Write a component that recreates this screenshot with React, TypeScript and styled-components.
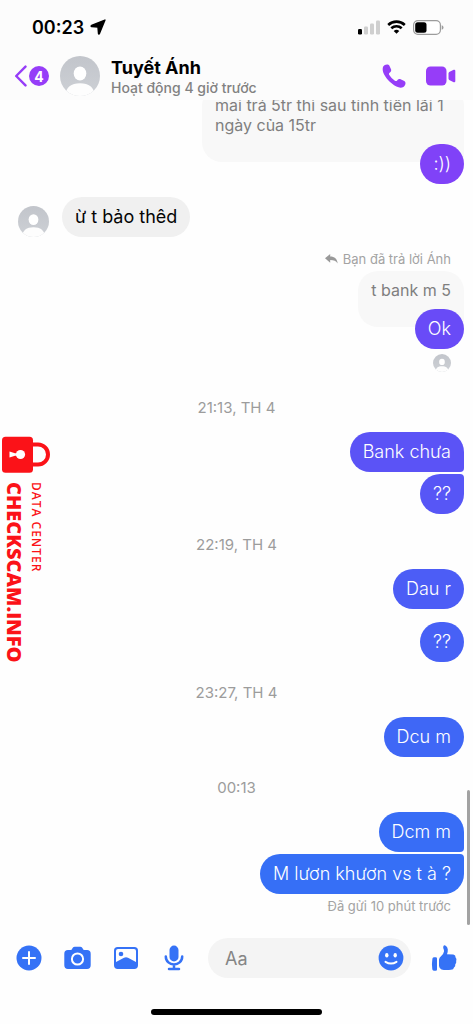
import React from "react";
import styled, { createGlobalStyle } from "styled-components";

const Global = createGlobalStyle`
  * { box-sizing: border-box; }
  body { margin: 0; background: #fefefe; font-family: Inter, "Noto Sans", sans-serif; color: #050505; }
  button, input { font: inherit; }
`;

const Screen = styled.div`
  position: relative;
  display: flex;
  flex-direction: column;
  height: 100vh;
  overflow: hidden;
`;

const Header = styled.header`
  flex: none;
  background: #fcfcfc;
`;

const StatusBar = styled.div`
  display: flex;
  align-items: center;
  justify-content: space-between;
  height: 54px;
  padding: 0 29px 0 32px;
`;

const Clock = styled.div`
  display: flex;
  align-items: center;
  gap: 6px;
  font-size: 18px;
  font-weight: 600;
  color: #000;
`;

const StatusIcons = styled.div`
  display: flex;
  align-items: center;
  gap: 7px;
`;

const NavBar = styled.div`
  display: flex;
  align-items: center;
  height: 46px;
  padding: 0 17px 2px 14px;
`;

const IconButton = styled.button<{ $color?: string }>`
  display: flex;
  align-items: center;
  justify-content: center;
  flex: none;
  padding: 0;
  border: 0;
  background: none;
  color: ${(p) => p.$color ?? "#3572f6"};
`;

const Count = styled.span`
  display: grid;
  place-items: center;
  width: 20px;
  height: 20px;
  margin-left: 1px;
  border-radius: 50%;
  background: #963df8;
  color: #fff;
  font-size: 14px;
  font-weight: 700;
`;

const Profile = styled.div`
  flex: 1;
  min-width: 0;
  display: flex;
  align-items: center;
  gap: 11px;
  margin-left: 11px;
`;

const Name = styled.h1`
  margin: 0;
  font-size: 18px;
  line-height: 22px;
  font-weight: 700;
  color: #000;
`;

const Activity = styled.p`
  margin: 0;
  font-size: 14px;
  line-height: 17px;
  font-weight: 500;
  color: #828282;
  white-space: nowrap;
`;

const Calls = styled.div`
  display: flex;
  align-items: center;
  gap: 20px;
`;

const Thread = styled.main`
  flex: 1;
  min-height: 0;
  display: flex;
  flex-direction: column;
  justify-content: flex-end;
  overflow: hidden;
  padding: 0 9px 11px 18px;
`;

const Bubble = styled.p<{ $color: string; $join?: "top" | "bottom"; $incoming?: boolean }>`
  position: relative;
  flex: none;
  align-self: flex-end;
  margin: 0;
  padding: 8px 13px;
  border-radius: 20px;
  border-top-right-radius: ${(p) => (p.$join === "top" ? 4 : 20)}px;
  border-bottom-right-radius: ${(p) => (p.$join === "bottom" ? 4 : 20)}px;
  background: ${(p) => p.$color};
  color: ${(p) => (p.$incoming ? "#050505" : "#fff")};
  font-size: 18px;
  line-height: 24px;
  font-weight: ${(p) => (p.$incoming ? 400 : 300)};
`;

const Group = styled.div<{ $gap: number }>`
  flex: none;
  display: flex;
  flex-direction: column;
  gap: ${(p) => p.$gap}px;
`;

const Quote = styled.blockquote`
  flex: none;
  align-self: flex-end;
  max-width: 262px;
  margin: 0 0 -18px;
  padding: 9px 13px 27px;
  border-radius: 20px 20px 0 20px;
  background: #f8f8f8;
  color: #7f7f7f;
  font-size: 16px;
  line-height: 20px;
`;

const Incoming = styled.div`
  flex: none;
  display: flex;
  align-items: flex-end;
  gap: 13px;
  margin: 13px 0 14px;
`;

const ReplyLabel = styled.div`
  flex: none;
  display: flex;
  align-items: center;
  justify-content: flex-end;
  gap: 5px;
  margin-bottom: 4px;
  padding-right: 13px;
  color: #a3a3a3;
  font-size: 13px;
  line-height: 16px;
`;

const Seen = styled.div`
  flex: none;
  display: flex;
  justify-content: flex-end;
  padding: 5px 13px;
`;

const Stamp = styled.time`
  flex: none;
  display: block;
  margin: 23px 0 16px;
  padding-right: 9px;
  text-align: center;
  color: #9c9c9c;
  font-size: 15px;
  line-height: 16px;
`;

const Sent = styled.p`
  flex: none;
  margin: 4px 13px 0 0;
  text-align: right;
  color: #a3a3a3;
  font-size: 13px;
  line-height: 16px;
`;

const Composer = styled.form`
  flex: none;
  display: flex;
  align-items: center;
  padding: 13px 16px 0;
`;

const Tools = styled.div`
  display: flex;
  align-items: center;
  gap: 22px;
  margin-right: 21px;
`;

const Field = styled.div`
  flex: 1;
  min-width: 0;
  display: flex;
  align-items: center;
  height: 40px;
  margin-right: 20px;
  padding: 0 7px 0 17px;
  border-radius: 20px;
  background: #f4f4f4;
`;

const TextInput = styled.input`
  flex: 1;
  min-width: 0;
  padding: 0;
  border: 0;
  outline: 0;
  background: none;
  font-size: 18px;
  color: #050505;
  &::placeholder { color: #858585; opacity: 1; }
`;

const HomeBar = styled.div`
  flex: none;
  width: 36%;
  height: 6px;
  margin: 31px auto 9px;
  border-radius: 3px;
  background: #000;
`;

const ScrollThumb = styled.div`
  position: absolute;
  right: 3px;
  bottom: 99px;
  width: 3px;
  height: 135px;
  border-radius: 2px;
  background: #a2a2a2;
`;

const Watermark = styled.aside`
  position: absolute;
  left: 2px;
  top: 436px;
  display: flex;
  flex-direction: column;
  gap: 9px;
  color: #fb1218;
  font-family: "Open Sans", sans-serif;
`;

const MarkText = styled.div`
  display: flex;
  flex-direction: column;
  writing-mode: vertical-rl;
  white-space: nowrap;
  align-self: flex-start;
`;

const MarkTitle = styled.strong`
  font-size: 20px;
  line-height: 24px;
  font-weight: 800;
`;

const MarkSub = styled.span`
  font-size: 12px;
  line-height: 20px;
  font-weight: 600;
  letter-spacing: 1px;
`;

const AvatarArt = styled.svg`
  display: block;
  flex: none;
`;

function Avatar({ size, id }: { size: number; id: string }) {
  return (
    <AvatarArt width={size} height={size} viewBox="0 0 40 40" aria-hidden="true">
      <defs>
        <linearGradient id={id} x1="0" y1="0" x2="0" y2="1">
          <stop offset="0" stopColor="#c2c5cb" />
          <stop offset="1" stopColor="#cdd0d5" />
        </linearGradient>
        <clipPath id={id + "c"}><circle cx="20" cy="20" r="20" /></clipPath>
      </defs>
      <g clipPath={`url(#${id}c)`}>
        <rect width="40" height="40" fill={`url(#${id})`} />
        <ellipse cx="20" cy="17.500" rx="6.300" ry="7" fill="#fff" />
        <path d="M5 40C6 31 11 27.300 20 27.300S34 31 35 40Z" fill="#fdfdfd" />
      </g>
    </AvatarArt>
  );
}

export default function App() {
  return (
    <>
      <Global />
      <Screen>
        <Header>
          <StatusBar>
            <Clock>
              00:23
              <svg width="16" height="16" viewBox="0 0 15 15" aria-hidden="true">
                <path d="M14 1 8.800 13.600Q8.300 14.400 8 13.500L7.500 7.500 1.500 7Q.6 6.700 1.500 6.100Z" fill="#000" stroke="#000" strokeWidth="1.400" strokeLinejoin="round" />
              </svg>
            </Clock>
            <StatusIcons>
              <svg width="22" height="15" viewBox="0 0 22 15" aria-hidden="true">
                <rect x="0" y="9" width="4" height="5.500" rx="1.200" fill="#000" />
                <g fill="#cfcfcf">
                  <rect x="6" y="6.500" width="4" height="8" rx="1.200" />
                  <rect x="12" y="3.500" width="4" height="11" rx="1.200" />
                  <rect x="18" y=".5" width="4" height="14" rx="1.200" />
                </g>
              </svg>
              <svg width="19" height="14" viewBox="0 0 19 14" fill="none" stroke="#000" strokeWidth="2.600" aria-hidden="true">
                <path d="M1.200 5A12 12 0 0 1 17.800 5" />
                <path d="M4.300 8.300A7.600 7.600 0 0 1 14.700 8.300" />
                <path d="M9.500 13.800 6.700 11Q9.500 8.700 12.300 11Z" fill="#000" stroke="none" />
              </svg>
              <svg width="31" height="15" viewBox="0 0 31 15" aria-hidden="true">
                <rect x=".6" y=".6" width="26.800" height="13.800" rx="4.300" fill="#fff" stroke="#9c9c9c" strokeWidth="1.200" />
                <rect x="2.200" y="2.300" width="11.300" height="10.400" rx="2.500" fill="#000" />
                <path d="M28.700 5.200Q30.500 5.800 30.500 7.500T28.700 9.800Z" fill="#9c9c9c" />
              </svg>
            </StatusIcons>
          </StatusBar>
          <NavBar>
            <IconButton type="button" $color="#963df8" aria-label="Quay lại">
              <svg width="14" height="22" viewBox="0 0 14 22" fill="none" stroke="currentColor" strokeWidth="2.400" strokeLinecap="round" strokeLinejoin="round">
                <path d="M11.500 1.600 2.200 11 11.500 20.400" />
              </svg>
              <Count>4</Count>
            </IconButton>
            <Profile>
              <Avatar size={40} id="a1" />
              <div>
                <Name>Tuyết Ánh</Name>
                <Activity>Hoạt động 4 giờ trước</Activity>
              </div>
            </Profile>
            <Calls>
              <IconButton type="button" $color="#963df8" aria-label="Gọi thoại">
                <svg width="24" height="24" viewBox="0 0 24 24" fill="currentColor">
                  <path d="M1.200 2.600C2.500.5 6-.2 7.400 1.700L9 5.300C9.600 7 8.700 8 7.600 8.800 6.700 9.600 6.900 10.300 7.500 11.300A15 15 0 0 0 12.600 16.500C13.700 17.200 14.400 17.300 15.200 16.400 16 15.300 17.100 14.600 18.600 15.200L22.300 16.900C24.400 18.200 23.500 21.500 21.400 22.900 18.800 24.500 14.500 23.700 9.600 19.300 3.500 14-.9 7.200 1.200 2.600Z" />
                </svg>
              </IconButton>
              <IconButton type="button" $color="#963df8" aria-label="Gọi video">
                <svg width="30" height="20" viewBox="0 0 30 20" fill="currentColor">
                  <rect x="0" y=".5" width="20.500" height="19" rx="4.500" />
                  <path d="M22.500 7.500Q22.500 6.700 23.200 6.100L27.700 3.800Q29.300 3.200 29.300 5V15Q29.300 16.800 27.700 16.200L23.200 13.900Q22.500 13.300 22.500 12.500Z" />
                </svg>
              </IconButton>
            </Calls>
          </NavBar>
        </Header>

        <Thread>
          <Quote>mai trả 5tr thì sau tính tiền lãi 1 ngày của 15tr</Quote>
          <Bubble $color="#8042f8">:))</Bubble>
          <Incoming>
            <Avatar size={31} id="a2" />
            <Bubble $color="#f0f0f0" $incoming>ừ t bảo thêd</Bubble>
          </Incoming>
          <ReplyLabel>
            <svg width="13" height="10" viewBox="0 0 13 10" fill="#999" aria-hidden="true">
              <path d="M0 4.300 5.200 0V2.600C9.500 2.600 12.300 4.800 12.600 9.600 11 7 9 6.100 5.200 6.100V8.700Z" />
            </svg>
            Bạn đã trả lời Ánh
          </ReplyLabel>
          <Quote>t bank m 5</Quote>
          <Bubble $color="#694bf7">Ok</Bubble>
          <Seen><Avatar size={18} id="a3" /></Seen>
          <Stamp>21:13, TH 4</Stamp>
          <Group $gap={2}>
            <Bubble $color="#5b53f6" $join="bottom">Bank chưa</Bubble>
            <Bubble $color="#5756f6" $join="top">??</Bubble>
          </Group>
          <Stamp>22:19, TH 4</Stamp>
          <Group $gap={13}>
            <Bubble $color="#4c5df6">Dau r</Bubble>
            <Bubble $color="#4761f6">??</Bubble>
          </Group>
          <Stamp>23:27, TH 4</Stamp>
          <Bubble $color="#3f67f6">Dcu m</Bubble>
          <Stamp>00:13</Stamp>
          <Group $gap={2}>
            <Bubble $color="#386df6" $join="bottom">Dcm m</Bubble>
            <Bubble $color="#366ff6" $join="top">M lươn khươn vs t à ?</Bubble>
          </Group>
          <Sent>Đã gửi 10 phút trước</Sent>
        </Thread>

        <Composer onSubmit={(e) => e.preventDefault()}>
          <Tools>
            <IconButton type="button" aria-label="Thêm">
              <svg width="26" height="26" viewBox="0 0 26 26">
                <circle cx="13" cy="13" r="12.500" fill="currentColor" />
                <path d="M13 7V19M7 13H19" stroke="#fff" strokeWidth="2" strokeLinecap="round" />
              </svg>
            </IconButton>
            <IconButton type="button" aria-label="Máy ảnh">
              <svg width="27" height="24" viewBox="0 0 27 24">
                <path d="M4 4H6.500Q7.800 4 8.300 2.500 8.900.8 10.600.8H16.400Q18.100.8 18.700 2.500 19.200 4 20.500 4H23Q26.700 4 26.700 7.700V19.300Q26.700 23 23 23H4Q.3 23 .3 19.300V7.700Q.3 4 4 4Z" fill="currentColor" />
                <circle cx="13.500" cy="13" r="5.600" fill="none" stroke="#fff" strokeWidth="2" />
              </svg>
            </IconButton>
            <IconButton type="button" aria-label="Ảnh">
              <svg width="26" height="24" viewBox="0 0 26 24">
                <path fillRule="evenodd" d="M4.700 1H21.300Q25 1 25 4.700V19.300Q25 23 21.300 23H4.700Q1 23 1 19.300V4.700Q1 1 4.700 1ZM5 3Q3 3 3 5V16L11 11.800Q13 10.800 15 11.800L23 16V5Q23 3 21 3Z" fill="currentColor" />
                <circle cx="8" cy="8" r="2.300" fill="currentColor" />
              </svg>
            </IconButton>
            <IconButton type="button" aria-label="Ghi âm">
              <svg width="26" height="26" viewBox="0 0 26 26" fill="none" stroke="currentColor" strokeWidth="2.500" strokeLinecap="round">
                <rect x="8.500" y=".6" width="9" height="15.800" rx="4.500" fill="currentColor" stroke="none" />
                <path d="M4.800 11.500C4.800 22 21.200 22 21.200 11.500M13 19.500V24M8 24H18" />
              </svg>
            </IconButton>
          </Tools>
          <Field>
            <TextInput type="text" placeholder="Aa" aria-label="Tin nhắn" />
            <IconButton type="button" aria-label="Biểu tượng cảm xúc">
              <svg width="26" height="26" viewBox="0 0 26 26">
                <circle cx="13" cy="13" r="12.400" fill="currentColor" />
                <ellipse cx="8.800" cy="10.300" rx="1.700" ry="2.300" fill="#fff" />
                <ellipse cx="17.200" cy="10.300" rx="1.700" ry="2.300" fill="#fff" />
                <path d="M7.500 16.800Q13 20.300 18.500 16.800" fill="none" stroke="#fff" strokeWidth="2" strokeLinecap="round" />
              </svg>
            </IconButton>
          </Field>
          <IconButton type="button" aria-label="Thích">
            <svg width="26" height="26" viewBox="0 0 26 26" fill="currentColor">
              <path d="M2.800 12.300H4.700Q6 12.300 6 13.600V24.500Q6 25.700 4.800 25.700H2.800Q1.500 25.700 1.300 24.300.5 19 1.400 13.800 1.600 12.300 2.800 12.300Z" />
              <path d="M12.500.9Q13 0 14.300.5 16.500 1.600 16.800 4.300 17 6.500 16 9.300L22.300 9.600Q24.800 10 24.600 12.500 26 13.700 25.200 16 25.600 18 24.300 19.200 24.600 21.500 23 22.500 22.600 24.700 20 24.800 13.500 25.300 10.500 24.400 8.300 23.500 8 21V14.500Q8.200 12.800 10 11.300 12.600 9 13 6.500 13.200 5 12.300 3.300 12 1.800 12.500.9Z" />
            </svg>
          </IconButton>
        </Composer>
        <HomeBar />
        <ScrollThumb />
        <Watermark>
          <svg width="48" height="37" viewBox="0 0 48 37" aria-hidden="true">
            <path d="M30 8.500H36A10 10 0 0 1 36 28.500H30" fill="none" stroke="currentColor" strokeWidth="4" />
            <rect x="0" y=".8" width="31" height="36" rx="3.500" fill="currentColor" />
            <circle cx="18.500" cy="18.500" r="4.600" fill="#fff" />
            <path d="M17 17.200 13 17.200 7.500 15.500V21.500L13 19.800 17 19.800Z" fill="#fff" />
          </svg>
          <MarkText>
            <MarkSub>DATA CENTER</MarkSub>
            <MarkTitle>CHECKSCAM.INFO</MarkTitle>
          </MarkText>
        </Watermark>
      </Screen>
    </>
  );
}
